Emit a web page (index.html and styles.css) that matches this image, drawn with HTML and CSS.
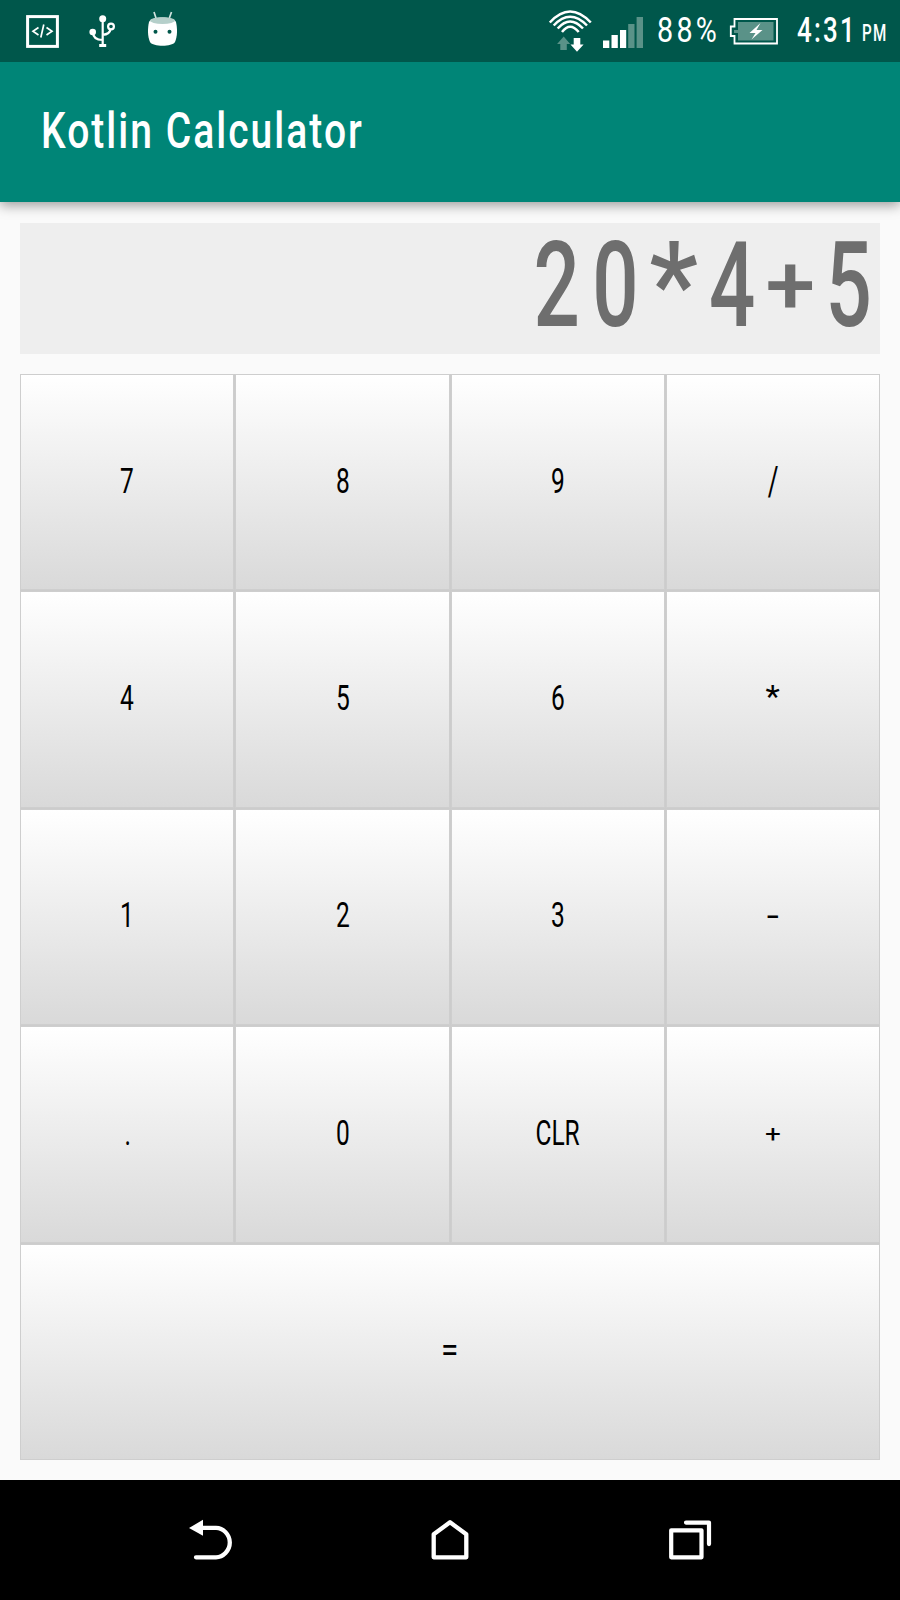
FILE: index.html
```html
<!DOCTYPE html>
<html lang="en">
<head>
<meta charset="utf-8">
<title>Kotlin Calculator</title>
<link rel="stylesheet" href="styles.css">
</head>
<body>
<div class="screen">
  <div class="status">
    <svg class="notifications" width="190" height="62" viewBox="0 0 190 62">
      <rect x="27.6" y="16.6" width="29.8" height="29.8" fill="none" stroke="#fff" stroke-width="3"/>
      <path d="M38.5 27.5L33 31.3l5.500 3.700M46.500 27.500l5.500 3.800-5.500 3.700M43.800 24.500l-3 13" fill="none" stroke="#fff" stroke-width="1.7"/>
      <g fill="none" stroke="#fff" stroke-width="2.200">
        <path d="M102.700 18v27M93 32c0 6 4 8 9.700 8M110.500 29c-.5 4-3.500 5.500-7.800 5.800"/>
        <circle cx="111" cy="26.500" r="2.900"/>
      </g>
      <circle cx="102.700" cy="18.800" r="3.500" fill="#fff"/><circle cx="92.700" cy="32" r="3.300" fill="#fff"/>
      <path d="M99.200 44h7v3h-7z" fill="#fff"/>
      <path d="M154 12l2.300 7M171.500 12l-2.500 7" stroke="#cfe2de" stroke-width="1.700"/>
      <path d="M149 22c2-6 25-6 27 0 1.500 7 1.500 14-1 20-3 5-22 5-25 0-2.500-6-2.500-13-1-20z" fill="#fff"/>
      <ellipse cx="162.500" cy="20.600" rx="12.500" ry="3.300" fill="#b5cfca"/>
      <circle cx="155.500" cy="31.700" r="2" fill="#00574b"/><circle cx="169.500" cy="31.700" r="2" fill="#00574b"/>
    </svg>
    <svg class="signals" width="104" height="62" viewBox="545 0 104 62">
      <g fill="none" stroke="#fff" stroke-width="2.500">
        <path d="M549.800 22.500Q570 .500 590.800 22.500M553.700 25.500Q570 8 587 25.500M557.700 28.500Q570 14.500 583 28.500M562 32Q570 21.500 578.700 32"/>
      </g>
      <path d="M563.700 36.500l6.500 7.500h-3.400v6h-6.500v-6h-3.200z" fill="#5a9288"/>
      <path d="M577 51.800l-6.500-7.300h3.200V38h6.600v6.500h3.300z" fill="#fff"/>
      <path d="M603 40.500h6.300V48H603zM611.500 35h6.300v13h-6.300zM620 30h6.200v18H620z" fill="#fff"/>
      <path d="M628.200 24h6.300v24h-6.300zM636.600 17h6.400v31h-6.400z" fill="#5a9288"/>
    </svg>
    <div class="slot slot-battery"><span class="text percent">88%</span></div>
    <svg class="battery" width="60" height="62" viewBox="725 0 60 62">
      <path d="M734.500 19h42.500v24.500h-42.500V36h-3.700v-9.500h3.700z" fill="none" stroke="#fff" stroke-width="1.800"/>
      <path d="M738 22h35.500v18.500H738V33h-4v-3h4z" fill="#5a9288"/>
      <path d="M760.500 23l-11 10h6l-4 6.500 11-9.500h-6z" fill="#fff"/>
    </svg>
    <div class="slot slot-time"><span class="text time">4:31</span></div>
    <div class="slot slot-period"><span class="text period">PM</span></div>
  </div>
  <header class="appbar"><span class="text title">Kotlin Calculator</span></header>
  <main class="main">
    <div class="display"><span class="text expression">20<span class="star">*</span>4<span class="plus">+</span>5</span></div>
    <div class="keys">
      <div class="key"><span class="text">7</span></div><div class="key"><span class="text">8</span></div><div class="key"><span class="text">9</span></div><div class="key"><span class="text slash">/</span></div>
      <div class="key"><span class="text">4</span></div><div class="key"><span class="text">5</span></div><div class="key"><span class="text">6</span></div><div class="key"><span class="text asterisk">*</span></div>
      <div class="key"><span class="text">1</span></div><div class="key"><span class="text">2</span></div><div class="key"><span class="text">3</span></div><div class="key"><span class="text minus">-</span></div>
      <div class="key"><span class="text">.</span></div><div class="key"><span class="text">0</span></div><div class="key"><span class="text">CLR</span></div><div class="key"><span class="text add">+</span></div>
      <div class="key equals"><span class="text equal-sign">=</span></div>
    </div>
  </main>
  <nav class="nav">
    <svg width="48" height="48" viewBox="186 1516 48 48">
      <path d="M196 1557.300h20c7 0 13.800-6.500 13.800-14.700s-6.800-14.800-13.800-14.800h-16" fill="none" stroke="#fff" stroke-width="4.300" stroke-linecap="round"/>
      <path d="M189 1528l14-8.200v16z" fill="#fff"/>
    </svg>
    <svg width="48" height="48" viewBox="426 1516 48 48">
      <path d="M433.700 1534.300l16.300-12 16.300 12v23h-32.600z" fill="none" stroke="#fff" stroke-width="4.300" stroke-linejoin="round"/>
    </svg>
    <svg width="48" height="48" viewBox="666 1516 48 48">
      <path d="M671.200 1530.300h30.300v27h-30.300zM686 1522.600h23v21.500" fill="none" stroke="#fff" stroke-width="4.200" stroke-linejoin="round" stroke-linecap="round"/>
    </svg>
  </nav>
</div>
</body>
</html>
```
FILE: styles.css
```css
* { box-sizing: border-box; }
body {
  margin: 0;
  background: #fafafa;
  font-family: Roboto, "Liberation Sans", sans-serif;
}
.screen {
  width: 900px;
  height: 1600px;
  display: flex;
  flex-direction: column;
  overflow: hidden;
}
svg { display: block; flex: none; }
.text {
  display: inline-block;
  white-space: nowrap;
  transform: scaleX(.7);
}
.status {
  height: 62px;
  flex: none;
  display: flex;
  background: #00574b;
  color: #fff;
}
.signals { margin-left: auto; }
.slot {
  flex: none;
  height: 62px;
  line-height: 61px;
}
.slot .text { transform-origin: left center; }
.slot-battery { width: 76px; padding-left: 8px; }
.slot-time { width: 76px; padding-left: 12px; }
.slot-period { width: 39px; padding-left: 1px; }
.slot .percent { font-size: 35px; letter-spacing: 4px; transform: scaleX(.82); }
.slot .time { font-size: 35px; font-weight: 500; letter-spacing: 3px; transform: scaleX(.74); }
.slot .period { font-size: 23px; font-weight: 500; line-height: 67px; letter-spacing: 2px; transform: scaleX(.66); }
.appbar {
  height: 140px;
  flex: none;
  display: flex;
  align-items: center;
  padding-left: 41px;
  background: #008577;
  color: #fff;
  box-shadow: 0 3px 12px rgba(0, 0, 0, .4);
  clip-path: inset(0 0 -20px 0);
  z-index: 1;
}
.title {
  font-size: 50px;
  font-weight: 500;
  line-height: 60px;
  padding-bottom: 2px;
  letter-spacing: 2.600px;
  transform: scaleX(.78);
  transform-origin: left center;
}
.main {
  height: 1278px;
  flex: none;
  display: flex;
  flex-direction: column;
  gap: 20px;
  padding: 21px 20px 20px;
}
.display {
  height: 131px;
  flex: none;
  display: flex;
  justify-content: flex-end;
  background: #eee;
  color: #6e6e6e;
}
.expression {
  font-size: 118px;
  font-weight: 500;
  line-height: 127px;
  letter-spacing: 18px;
  margin-right: -4px;
  transform: scaleX(.69);
  transform-origin: right center;
}
.star, .plus {
  display: inline-block;
  width: 66px;
  margin-right: 18px;
  letter-spacing: 0;
  text-align: center;
}
.star { transform: scaleX(1.35); }
.plus { transform: scale(1.1, .7); }
.keys {
  flex: 1;
  display: grid;
  grid-template-columns: repeat(4, 1fr);
  grid-template-rows: repeat(5, 1fr);
  gap: 1px;
  background: #ccc;
}
.key {
  display: flex;
  align-items: center;
  justify-content: center;
  border: 1px solid #cecece;
  background: linear-gradient(#fff, #d9d9d9);
  color: #000;
  font-size: 35px;
  line-height: 40px;
  padding-bottom: 1px;
}
.slash { transform: scale(.75, 1.15); }
.asterisk { transform: translateY(-2px) scale(.95, .9); }
.minus { transform: scaleX(1.25); }
.add { transform: scale(.8, .7); }
.equal-sign { transform: scaleX(.9); }
.equals { grid-column: span 4; }
.nav {
  height: 120px;
  flex: none;
  display: flex;
  justify-content: center;
  align-items: center;
  gap: 192px;
  background: #000;
}
```
